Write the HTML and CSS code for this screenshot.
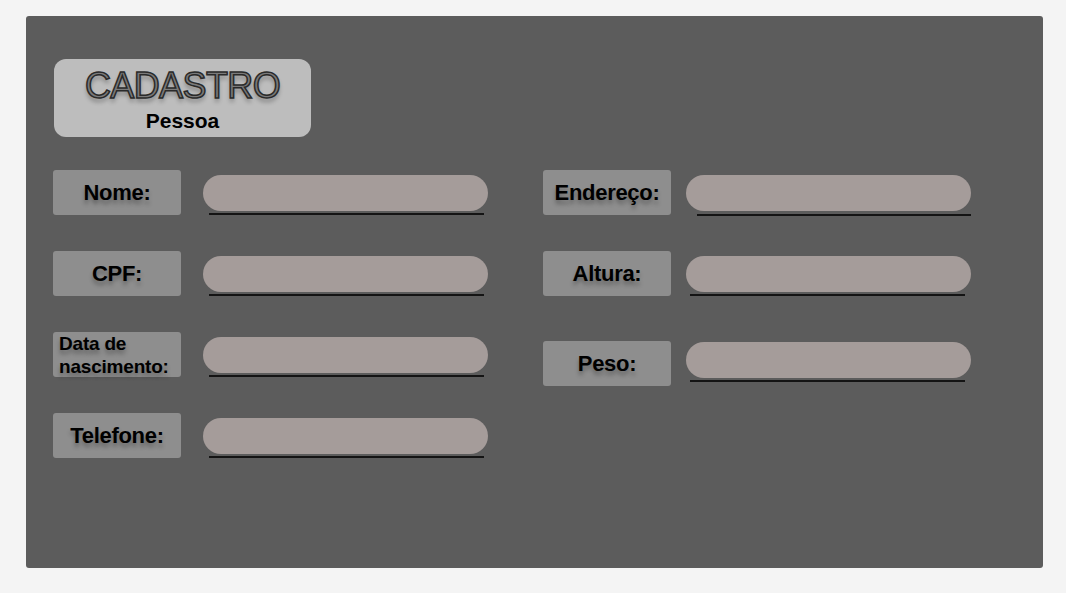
FILE: index.html
```html
<!DOCTYPE html>
<html lang="pt">
<head>
<meta charset="utf-8">
<title>Cadastro Pessoa</title>
<link rel="stylesheet" href="styles.css">
</head>
<body>
<main class="panel">
  <header class="title-box">
    <h1 class="title">CADASTRO</h1>
    <h2 class="subtitle">Pessoa</h2>
  </header>
  <section class="form">
    <div class="column column-left">
      <div class="row">
        <label class="label">Nome:</label>
        <div class="field"><input class="input" type="text"><span class="line line-a"></span></div>
      </div>
      <div class="row">
        <label class="label">CPF:</label>
        <div class="field"><input class="input" type="text"><span class="line line-a"></span></div>
      </div>
      <div class="row">
        <label class="label label-small">Data de nascimento:</label>
        <div class="field"><input class="input" type="text"><span class="line line-a"></span></div>
      </div>
      <div class="row">
        <label class="label">Telefone:</label>
        <div class="field"><input class="input" type="text"><span class="line line-a"></span></div>
      </div>
    </div>
    <div class="column column-right">
      <div class="row">
        <label class="label">Endereço:</label>
        <div class="field"><input class="input" type="text"><span class="line line-b"></span></div>
      </div>
      <div class="row">
        <label class="label">Altura:</label>
        <div class="field"><input class="input" type="text"><span class="line line-c"></span></div>
      </div>
      <div class="row row-peso">
        <label class="label">Peso:</label>
        <div class="field field-peso"><input class="input" type="text"><span class="line line-c"></span></div>
      </div>
    </div>
  </section>
</main>
</body>
</html>
```

FILE: styles.css
```css
* { box-sizing: border-box; }

html, body {
  margin: 0;
  background: #f4f4f4;
}

body {
  padding: 16px 23px 25px 26px;
  font-family: "Liberation Sans", Arial, Helvetica, sans-serif;
}

.panel {
  width: 1017px;
  height: 552px;
  background: #5c5c5c;
  border-radius: 3px;
  padding: 43px 0 0 27px;
}

.title-box {
  width: 257px;
  height: 78px;
  margin-left: 1px;
  background: #bdbdbd;
  border-radius: 12px;
  display: flex;
  flex-direction: column;
  align-items: center;
  padding-top: 8px;
}

.title {
  margin: 0;
  font-size: 36px;
  font-weight: 400;
  line-height: 38px;
  letter-spacing: -0.6px;
  color: #7a7a7a;
  -webkit-text-stroke: 1.5px #2a2a2a;
  text-shadow: 0 4px 4px rgba(0, 0, 0, 0.3);
}

.subtitle {
  margin: 4px 0 0;
  font-size: 21px;
  font-weight: 700;
  line-height: 23px;
  color: #000;
}

.form {
  display: flex;
  margin-top: 33px;
}

.column {
  display: flex;
  flex-direction: column;
  gap: 36px;
}

.column-left { width: 490px; }

.row {
  display: flex;
  align-items: flex-start;
  height: 45px;
}

.column-left .row { gap: 22px; }
.column-right .row { gap: 15px; }

.row-peso { margin-top: 9px; }

.label {
  width: 128px;
  height: 45px;
  flex: none;
  background: #8e8e8e;
  border-radius: 3px;
  display: flex;
  align-items: center;
  justify-content: center;
  font-size: 22px;
  font-weight: 700;
  letter-spacing: -0.3px;
  color: #000;
  text-shadow: 0 4px 4px rgba(0, 0, 0, 0.3);
  white-space: nowrap;
}

.label-small {
  display: block;
  white-space: normal;
  font-size: 19px;
  line-height: 23px;
  letter-spacing: -0.2px;
  padding: 0 0 0 6px;
}

.field {
  width: 285px;
  padding-top: 5px;
  display: flex;
  flex-direction: column;
}

.field-peso { padding-top: 1px; }

.input {
  width: 285px;
  height: 36px;
  border: none;
  border-radius: 18px;
  background: #a59c9a;
  outline: none;
  padding: 0 16px;
  font: inherit;
}

.line {
  display: block;
  height: 2px;
  background: #141414;
  margin-top: 2px;
}

.line-a { margin-left: 6px; margin-right: 4px; }
.line-b { margin-left: 11px; margin-right: 0; margin-top: 3px; }
.line-c { margin-left: 4px; margin-right: 6px; }
```
